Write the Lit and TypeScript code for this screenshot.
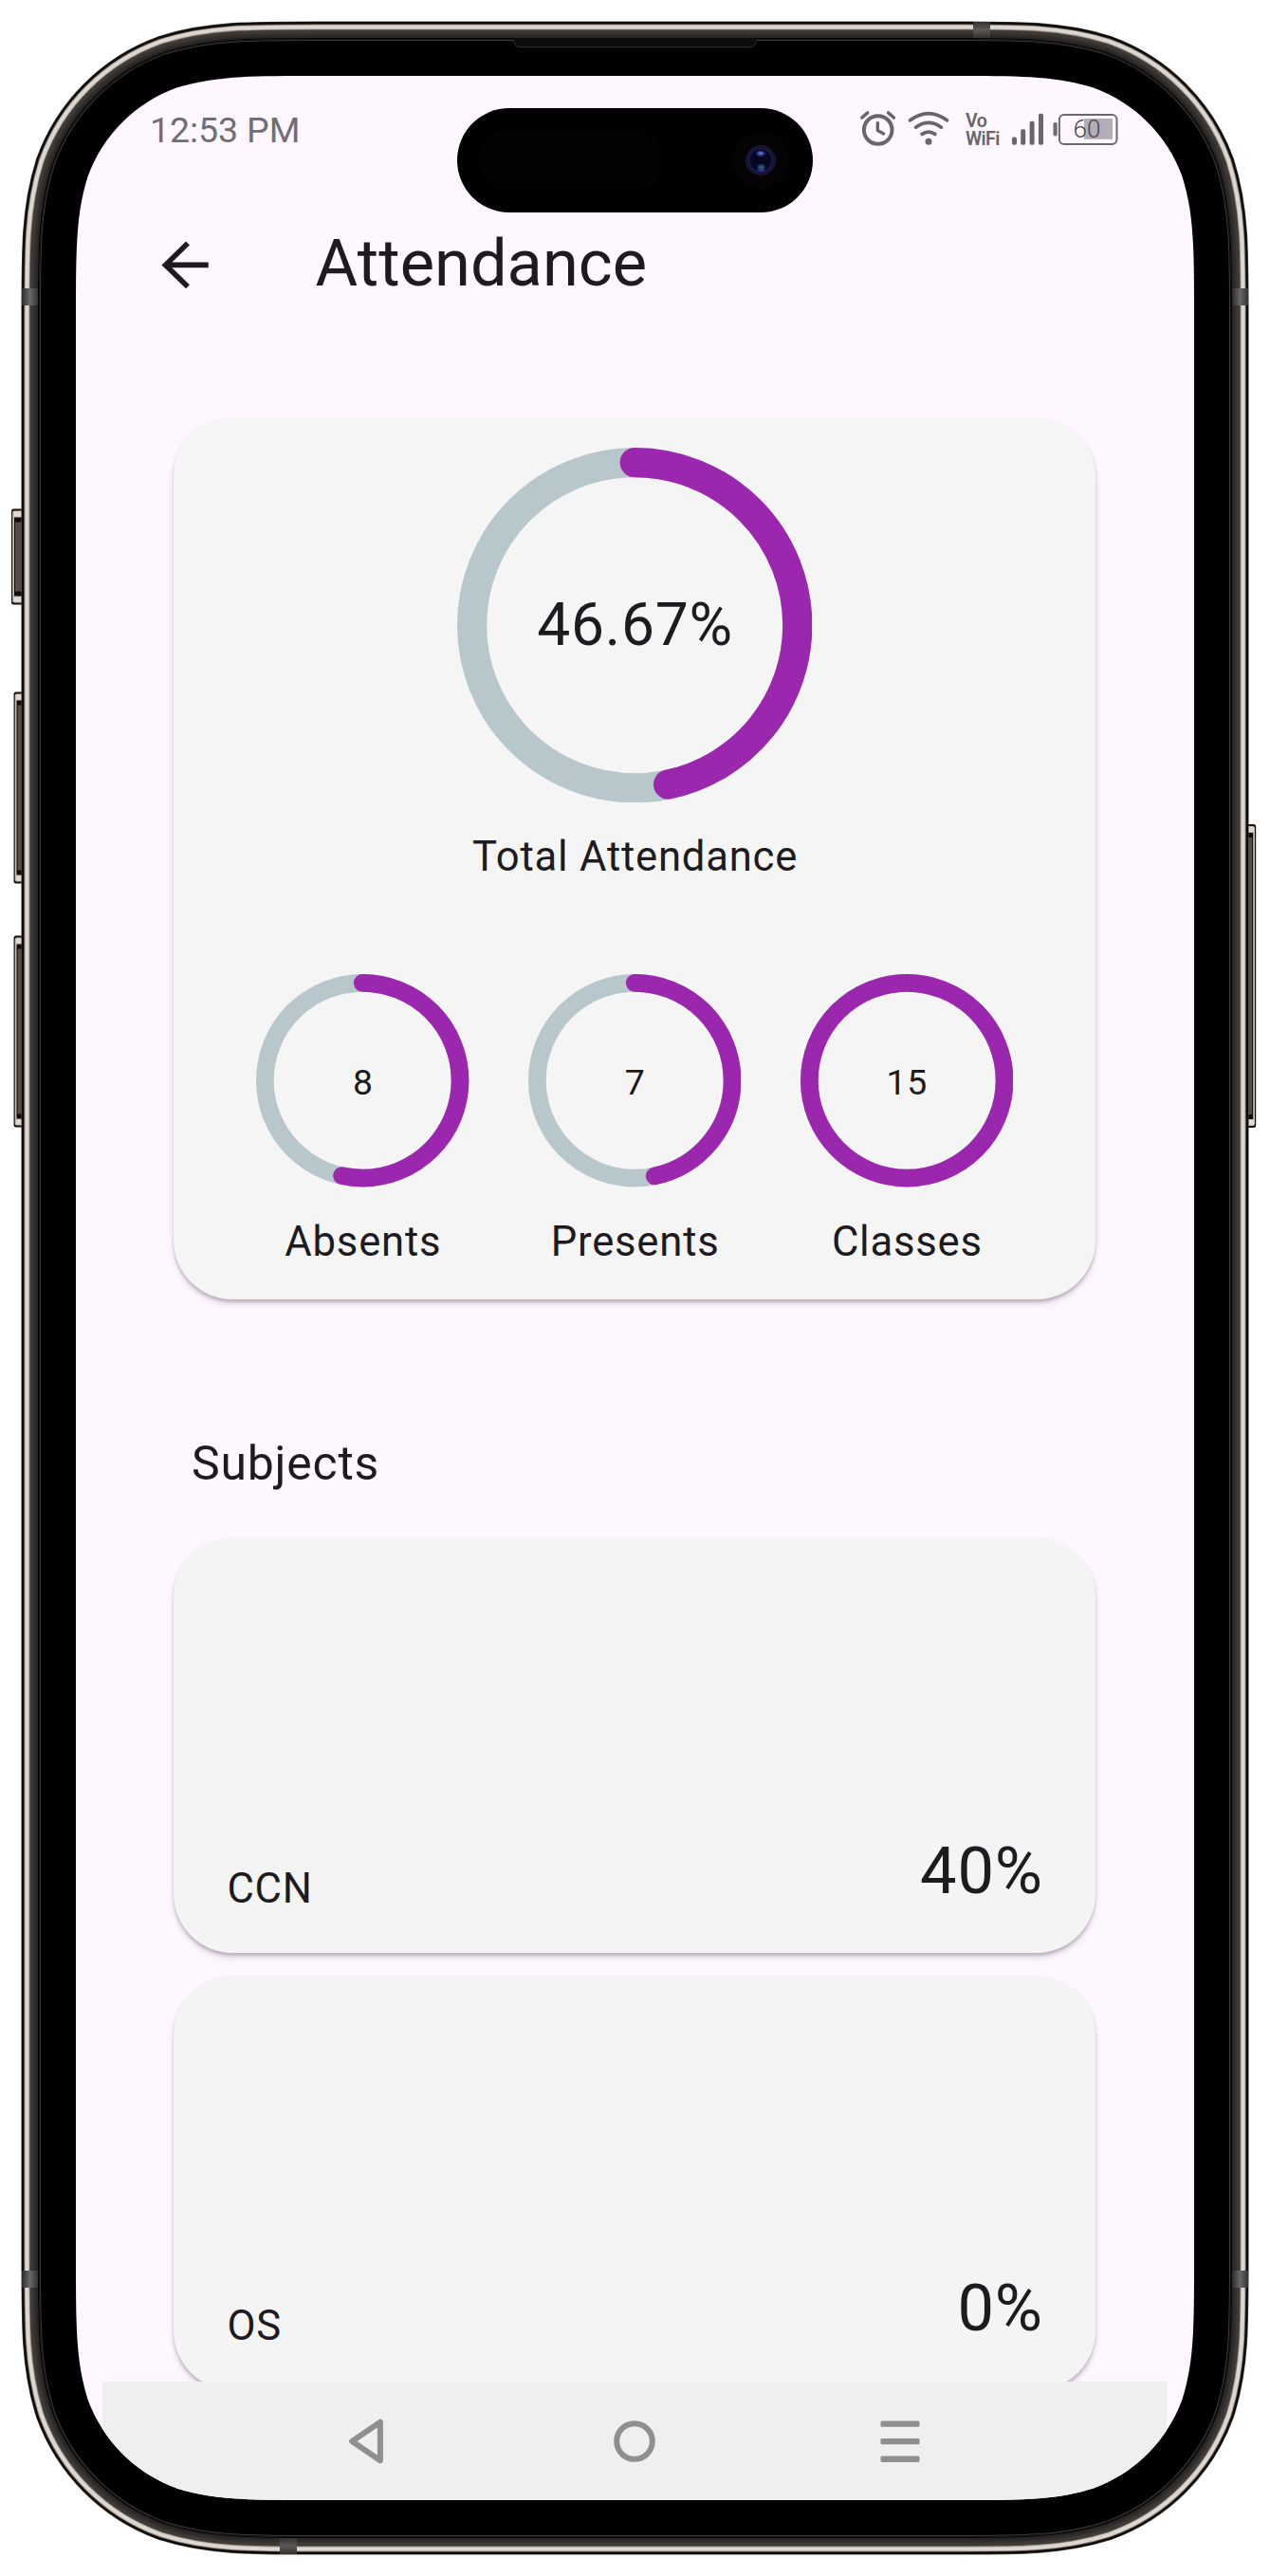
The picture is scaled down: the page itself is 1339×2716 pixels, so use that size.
import { LitElement, html, css, svg, unsafeCSS } from "lit";
import { customElement, property } from "lit/decorators.js";

/** Rounded rectangle with continuous-curvature corners. */
function smoothRect(x: number, y: number, w: number, h: number, r: number): string {
  const k = [1.528665, 1.088493, 0.868407, 0.631494, 0.074911, 0.372824, 0.169059].map((v) => v * r);
  const [a, b, c, d, e, f, g] = k;
  const corner = (ox: number, oy: number, ux: number, uy: number, vx: number, vy: number) => {
    const p = (u: number, v: number) =>
      `${(ox + ux * u + vx * v).toFixed(2)} ${(oy + uy * u + vy * v).toFixed(2)}`;
    return `${p(a, 0)} C${p(b, 0)} ${p(c, 0)} ${p(d, e)} C${p(f, g)} ${p(g, f)} ${p(e, d)} C${p(0, c)} ${p(0, b)} ${p(0, a)}`;
  };
  return (
    `M${corner(x + w, y, -1, 0, 0, 1)} ` +
    `L${corner(x + w, y + h, 0, -1, -1, 0)} ` +
    `L${corner(x, y + h, 1, 0, 0, -1)} ` +
    `L${corner(x, y, 0, 1, 1, 0)} Z`
  );
}

const SCREEN_CLIP = smoothRect(0, 0, 1179, 2556, 168);
const SCREEN_EDGE = smoothRect(80, 80, 1179, 2556, 168);

/** Bezel layers, outermost first: distance from the glass edge and colour. */
const BEZEL: Array<[number, string]> = [
  [57.6, "#4a4846"],
  [57, "#0c0a09"],
  [55, "#3b3531"],
  [54.3, "#958a81"],
  [53.6, "#ddd5cf"],
  [49.6, "#9a9189"],
  [48.8, "#504a46"],
  [48, "#3d3936"],
  [45, "#332f2d"],
  [42.5, "#292625"],
  [40, "#000000"],
  [39.2, "#1c1c1c"],
  [38.5, "#050505"],
  [38, "#3c3c3c"],
  [37, "#000000"],
];

@customElement("phone-frame")
export class PhoneFrame extends LitElement {
  static styles = css`
    :host { display: block; width: 1339px; height: 2716px; }
    svg { display: block; }
  `;

  private sideKey(x: number, y: number, w: number, h: number, flip = false) {
    const t = flip ? `translate(${x + w} ${y}) scale(-1 1)` : `translate(${x} ${y})`;
    return svg`<g transform=${t}>
      <rect width=${w + 4} height=${h} rx="2.5" fill="#14110f"/>
      <rect x="1.2" y="2" width=${w + 3} height=${h - 4} rx="2" fill="#c9beb3"/>
      <rect x="2.6" y="3" width=${w} height="5" rx="1.5" fill="#e4dad4"/>
      <rect x="2.6" y=${h - 8} width=${w} height="5" rx="1.5" fill="#e4dad4"/>
      <rect x="3" y="9" width=${w} height=${h - 18} fill="#0d0b0a"/>
      <rect x="4" y="14" width=${w - 4} height=${h - 28} fill="#514d4a"/>
    </g>`;
  }

  render() {
    return html`<svg width="1339" height="2716" viewBox="0 0 1339 2716">
      <defs>
        <linearGradient id="bandH"><stop offset="0" stop-color="#2d2c2b"/><stop offset=".5" stop-color="#6a6866"/><stop offset="1" stop-color="#343231"/></linearGradient>
        <linearGradient id="bandV" x2="0" y2="1"><stop offset="0" stop-color="#343231"/><stop offset=".5" stop-color="#5c5a58"/><stop offset="1" stop-color="#343231"/></linearGradient>
      </defs>
      ${this.sideKey(12, 536.5, 11, 101)}
      ${this.sideKey(14.5, 729.5, 8.5, 202)}
      ${this.sideKey(14.5, 986.5, 8.5, 202)}
      ${this.sideKey(1316, 869, 8.2, 320, true)}
      ${BEZEL.map(
        ([d, color]) => svg`<path d=${SCREEN_EDGE} fill="none" stroke=${color} stroke-width=${d * 2}/>`
      )}
      <rect x="23" y="304" width="17" height="18" fill="url(#bandH)"/>
      <rect x="1299" y="304" width="17" height="18" fill="url(#bandH)"/>
      <rect x="23" y="2394" width="17" height="18" fill="url(#bandH)"/>
      <rect x="1299" y="2394" width="17" height="18" fill="url(#bandH)"/>
      <rect x="1026" y="23" width="18" height="17" fill="url(#bandV)"/>
      <rect x="295" y="2676" width="18" height="17" fill="url(#bandV)"/>
      <path d="M541 41.5 C543 46 543 49.7 549 49.7 H790 C796 49.7 796 46 798 41.5Z" fill="#0c0c0c"/>
      <path d="M541 42.5 C543 46 543 49.7 549 49.7 H790 C796 49.7 796 46 798 42.5" fill="none" stroke="#333" stroke-width="1"/>
      <path d=${SCREEN_EDGE} fill="#000"/>
    </svg>`;
  }
}

@customElement("progress-ring")
export class ProgressRing extends LitElement {
  @property({ type: Number }) size = 100;
  @property({ type: Number }) line = 10;
  @property({ type: Number }) value = 0;

  static styles = css`
    :host { display: grid; place-items: center; }
    svg, .label { grid-area: 1 / 1; }
    svg { display: block; }
  `;

  render() {
    const r = (this.size - this.line) / 2;
    const c = this.size / 2;
    const len = 2 * Math.PI * r;
    return html`
      <svg width=${this.size} height=${this.size} viewBox="0 0 ${this.size} ${this.size}">
        <circle cx=${c} cy=${c} r=${r} fill="none" stroke="#b8c7cb" stroke-width=${this.line}></circle>
        <circle cx=${c} cy=${c} r=${r} fill="none" stroke="#9b27af" stroke-width=${this.line}
          stroke-linecap="round" stroke-dasharray="${len * this.value} ${len}"
          transform="rotate(-90 ${c} ${c})"></circle>
      </svg>
      <div class="label"><slot></slot></div>
    `;
  }
}

@customElement("app-root")
export class AppRoot extends LitElement {
  private stats = [
    { label: "Absents", count: 8, share: 8 / 15 },
    { label: "Presents", count: 7, share: 7 / 15 },
    { label: "Classes", count: 15, share: 1 },
  ];

  private subjects = [
    { name: "CCN", percent: 40 },
    { name: "OS", percent: 0 },
  ];

  static styles = css`
    :host {
      display: block; width: 1339px; height: 2716px; overflow: hidden; background: #fff;
      font-family: Roboto, "Liberation Sans", sans-serif; color: #1d1b20;
    }
    .device { display: grid; position: relative; }
    phone-frame, .screen { grid-area: 1 / 1; }
    .screen {
      margin: 80px; width: 1179px; height: 2556px; box-sizing: border-box;
      display: flex; flex-direction: column; background: #fef7ff; position: relative;
      clip-path: path("${unsafeCSS(SCREEN_CLIP)}");
    }
    svg { display: block; flex: none; }

    .status {
      display: flex; align-items: center; height: 76px; flex: none;
      padding: 0 79px 0 78px; margin-top: 20px; color: #69666b;
    }
    .time {
      font-size: 37.5px; line-height: 44px; margin-right: auto; white-space: nowrap;
      color: #716e73; padding-bottom: 2px; letter-spacing: -0.1px;
    }
    .wifi { margin-left: 10px; }
    .vowifi {
      margin-left: 17px; width: 40px; font-size: 19.6px; line-height: 19.2px;
      font-weight: 600; letter-spacing: -0.6px; padding-bottom: 2px;
    }
    .signal { margin-left: 8px; }
    .battery { margin-left: 9px; }
    .battery-text { font: 300 26px Roboto, sans-serif; }

    .appbar {
      display: flex; align-items: center; gap: 100px; height: 206.8px; flex: none;
      padding-left: 77.8px;
    }
    .title { font-size: 68.6px; line-height: 80px; padding-bottom: 2px; white-space: nowrap; }

    .content { flex: 1; min-height: 0; overflow: hidden; padding: 57.2px 103.7px 0 102.9px; }
    .card {
      background: #f5f5f5; border-radius: 62.3px; box-sizing: border-box;
      box-shadow: 0 3px 3px rgba(60, 45, 65, 0.22), 0 5px 6px rgba(60, 45, 65, 0.14);
    }
    .summary {
      height: 930.2px; padding-top: 32px; display: flex; flex-direction: column; align-items: center;
    }
    .caption {
      font-size: 43.64px; line-height: 62px; letter-spacing: 0.78px; white-space: nowrap;
      padding-left: 1px;
    }
    .total { margin-top: 27px; }
    .percent { font-size: 62.3px; line-height: 74px; letter-spacing: 0.78px; padding-left: 1px; }
    .stats { display: flex; gap: 62.4px; margin-top: 92px; }
    .stat { width: 224.4px; display: flex; flex-direction: column; align-items: center; gap: 27.2px; }
    .count {
      font-size: 37.4px; line-height: 44px; letter-spacing: 0.78px; padding-top: 3.6px;
      padding-left: 1px;
    }

    .heading {
      margin: 138.3px 0 43px; padding-left: 19.2px;
      font-size: 49.9px; line-height: 70px; letter-spacing: 0.78px; font-weight: 400;
    }
    .subjects { display: flex; flex-direction: column; gap: 23.7px; }
    .subject {
      height: 437.6px; padding: 0 55.5px 42px 56.5px; background: #f4f4f4;
      display: flex; align-items: flex-end; justify-content: space-between;
    }
    .name { font-size: 43.64px; line-height: 50px; letter-spacing: 0.78px; }
    .score { font-size: 68.6px; line-height: 80px; margin-bottom: 4.4px; letter-spacing: 0.78px; }

    .nav {
      height: 125px; flex: none; margin: 0 29px 0 28px; background: #efefef;
      display: flex; align-items: center; padding-left: 247.5px; box-sizing: border-box;
      position: relative;
    }
    .home { margin-left: 223.5px; }
    .menu { margin-left: 220.3px; }

    .island { position: absolute; left: 482px; top: 114px; }
  `;

  private statusIcons() {
    return html`
      <svg width="42" height="44" viewBox="905 116 42 44" fill="none" stroke="#69666b" stroke-linecap="round" stroke-linejoin="round">
        <circle cx="925.7" cy="137" r="14.8" stroke-width="4"/>
        <path d="M908.8 124 L914.6 119 M942.4 124 L936.6 119" stroke-width="3.6"/>
        <path d="M925.3 129.5 V137.6 L931.6 141" stroke-width="3.4"/>
      </svg>
      <svg class="wifi" width="44" height="44" viewBox="957 116 44 44" fill="none" stroke="#69666b" stroke-linecap="round" stroke-width="3.8">
        <path d="M959.6 126.8 Q979 112.4 998.4 126.8"/>
        <path d="M965.6 134.2 Q979 124.6 992.4 134.2"/>
        <path d="M972.2 141.4 Q979 136.8 985.8 141.4"/>
        <circle cx="979" cy="149.3" r="3.5" fill="#69666b" stroke="none"/>
      </svg>
      <div class="vowifi">Vo<br />WiFi</div>
      <svg class="signal" width="35" height="44" viewBox="1066 116 35 44" fill="#69666b">
        <rect x="1067" y="144.6" width="5" height="8.2" rx="1.8"/>
        <rect x="1076.2" y="136.2" width="5" height="16.6" rx="1.8"/>
        <rect x="1085.6" y="127.8" width="5" height="25" rx="1.8"/>
        <rect x="1095" y="119.7" width="5" height="33.1" rx="1.8"/>
      </svg>
      <svg class="battery" width="70" height="44" viewBox="1110 116 70 44">
        <rect x="1110.5" y="129" width="4.2" height="14.4" rx="1.6" fill="#6f6c71"/>
        <rect x="1116.9" y="120.9" width="60.6" height="31" rx="5" fill="none" stroke="#6b686d" stroke-width="2"/>
        <rect x="1143" y="125" width="30" height="21.8" fill="#b3adb5"/>
        <text class="battery-text" x="1131.6" y="144.8" fill="#4c494e">60</text>
      </svg>
    `;
  }

  render() {
    return html`
      <div class="device">
        <phone-frame></phone-frame>
        <div class="screen">
          <div class="status">
            <div class="time">12:53 PM</div>
            ${this.statusIcons()}
          </div>
          <div class="appbar">
            <svg width="74.8" height="74.8" viewBox="0 0 24 24" fill="#1d1b20">
              <path d="M19.8 11.1H7.5l5.95-5.8L12.2 4 4 12l8.2 8 1.25-1.3-5.95-5.8H19.8z"/>
            </svg>
            <div class="title">Attendance</div>
          </div>
          <div class="content">
            <div class="card summary">
              <progress-ring .size=${374.4} .line=${31.2} .value=${0.4667}>
                <div class="percent">46.67%</div>
              </progress-ring>
              <div class="caption total">Total Attendance</div>
              <div class="stats">
                ${this.stats.map(
                  (s) => html`<div class="stat">
                    <progress-ring .size=${224.4} .line=${18.7} .value=${s.share}>
                      <div class="count">${s.count}</div>
                    </progress-ring>
                    <div class="caption">${s.label}</div>
                  </div>`
                )}
              </div>
            </div>
            <div class="heading">Subjects</div>
            <div class="subjects">
              ${this.subjects.map(
                (s) => html`<div class="card subject">
                  <div class="name">${s.name}</div>
                  <div class="score">${s.percent}%</div>
                </div>`
              )}
            </div>
          </div>
          <div class="nav">
            <svg width="60" height="60" viewBox="356 2543.5 60 60" fill="none" stroke="#8f8f8f" stroke-width="6" stroke-linejoin="round">
              <path d="M371.2 2573.5 L400.9 2553.2 V2593.8 Z"/>
            </svg>
            <svg class="home" width="60" height="60" viewBox="0 0 60 60" fill="none" stroke="#8f8f8f" stroke-width="6">
              <circle cx="30" cy="30" r="18.8"/>
            </svg>
            <svg class="menu" width="60" height="60" viewBox="0 0 60 60" fill="#8f8f8f">
              <rect x="9.5" y="8.4" width="41" height="6.4" rx="1.4"/>
              <rect x="9.5" y="26.9" width="41" height="6.4" rx="1.4"/>
              <rect x="9.5" y="45.6" width="41" height="6.4" rx="1.4"/>
            </svg>
          </div>
        </div>
        <svg class="island" width="375" height="110" viewBox="0 0 375 110">
          <defs>
            <radialGradient id="glint" cx=".5" cy=".3" r=".5"><stop offset="0" stop-color="#8088e8"/><stop offset=".5" stop-color="#2c3088"/><stop offset="1" stop-color="#0a0a38" stop-opacity="0"/></radialGradient>
            <radialGradient id="glow" cx=".5" cy=".6" r=".5"><stop offset="0" stop-color="#1f8088"/><stop offset=".6" stop-color="#152c50"/><stop offset="1" stop-color="#0a0a38" stop-opacity="0"/></radialGradient>
          </defs>
          <rect width="375" height="110" rx="55" fill="#000"/>
          <rect x="22" y="22" width="194" height="65" rx="32" fill="#030303"/>
          <circle cx="320" cy="55" r="30" fill="#060307"/>
          <circle cx="320" cy="55" r="16" fill="#15162c"/>
          <circle cx="320" cy="55" r="12" fill="#06061c" stroke="#171955" stroke-width="1.6"/>
          <ellipse cx="320" cy="49.5" rx="7" ry="4.5" fill="url(#glint)"/>
          <ellipse cx="320.5" cy="61.5" rx="6" ry="5" fill="url(#glow)"/>
          <ellipse cx="320.5" cy="65.6" rx="3.4" ry="1" fill="#5a2aa0"/>
        </svg>
      </div>
    `;
  }
}
